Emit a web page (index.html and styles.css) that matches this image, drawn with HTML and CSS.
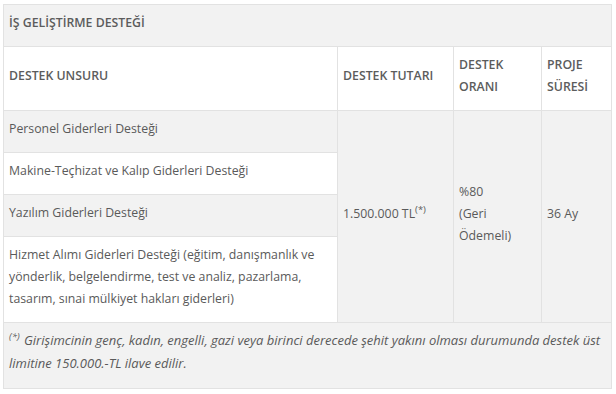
FILE: index.html
```html
<!DOCTYPE html>
<html lang="tr">
<head>
<meta charset="utf-8">
<link rel="stylesheet" href="styles.css">
</head>
<body>
<table class="support">
  <colgroup>
    <col class="c1"><col class="c2"><col class="c3"><col class="c4">
  </colgroup>
  <tr class="gray">
    <td colspan="4" class="head">İŞ GELİŞTİRME DESTEĞİ</td>
  </tr>
  <tr class="white">
    <td class="head">DESTEK UNSURU</td>
    <td class="head">DESTEK TUTARI</td>
    <td class="head">DESTEK ORANI</td>
    <td class="head">PROJE SÜRESİ</td>
  </tr>
  <tr class="gray">
    <td>Personel Giderleri Desteği</td>
    <td rowspan="4" class="merged">1.500.000 TL<sup>(*)</sup></td>
    <td rowspan="4" class="merged">%80<br>(Geri<br>Ödemeli)</td>
    <td rowspan="4" class="merged">36 Ay</td>
  </tr>
  <tr class="white">
    <td>Makine-Teçhizat ve Kalıp Giderleri Desteği</td>
  </tr>
  <tr class="gray">
    <td>Yazılım Giderleri Desteği</td>
  </tr>
  <tr class="white">
    <td>Hizmet Alımı Giderleri Desteği (eğitim, danışmanlık ve yönderlik, belgelendirme, test ve analiz, pazarlama, tasarım, sınai mülkiyet hakları giderleri)</td>
  </tr>
  <tr class="gray">
    <td colspan="4" class="note"><sup>(*)</sup> Girişimcinin genç, kadın, engelli, gazi veya birinci derecede şehit yakını olması durumunda destek üst limitine 150.000.-TL ilave edilir.</td>
  </tr>
</table>
</body>
</html>
```

FILE: styles.css
```css
html, body {
  margin: 0;
  background: #ffffff;
}
body {
  padding: 4px 5px 0 3px;
  font-family: "Open Sans", "DejaVu Sans", sans-serif;
  font-size: 12.3px;
  color: #5a5a5a;
}
.support {
  border-collapse: collapse;
  width: 608px;
  table-layout: fixed;
  border: 1px solid #e2e2e2;
}
.c1 { width: 334px; }
.c2 { width: 116px; }
.c3 { width: 88px; }
.c4 { width: 70px; }
.support td {
  border: 1px solid #e2e2e2;
  padding: 7px 5px 12px;
  line-height: 22px;
  vertical-align: middle;
  text-align: left;
}
.gray td { background: #f2f2f2; }
.white td { background: #ffffff; }
.support td.merged { background: #f2f2f2; }
.head {
  font-weight: 600;
  color: #5c5c5c;
}
.support td.note {
  font-style: italic;
  font-size: 13px;
  padding-top: 6px;
  padding-bottom: 13px;
  line-height: 23px;
}
sup {
  font-size: 9.5px;
  line-height: 0;
  vertical-align: 5px;
  margin-right: 1px;
}
```
